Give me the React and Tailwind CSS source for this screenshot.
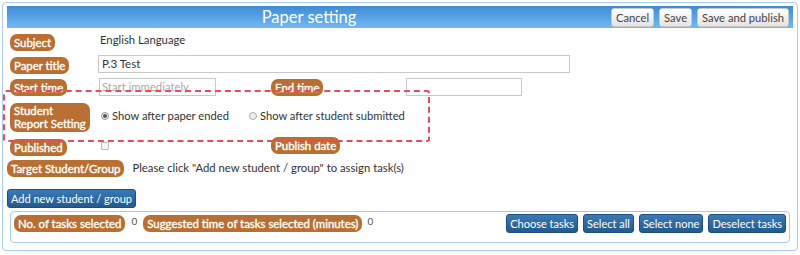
import React from "react";

const Label = ({ children, className = "h-[17px]" }) => (
  <span
    className={
      "inline-flex items-center bg-[#b96f31] text-white text-[11.4px] leading-[13px] px-[4px] rounded-[7px] whitespace-nowrap [-webkit-text-stroke:0.35px_white] " +
      className
    }
  >
    {children}
  </span>
);

const GrayBtn = ({ children }) => (
  <button className="h-[19px] px-[4px] text-[11.2px] leading-[17px] text-[#444] border border-[#c9c9c9] rounded-[3px] bg-gradient-to-b from-[#ffffff] to-[#e4e4e4]">
    {children}
  </button>
);

const BlueBtn = ({ children }) => (
  <button className="h-[19px] px-[3px] text-[11px] leading-[17px] text-white border border-[#1d4f7e] rounded-[3px] bg-gradient-to-b from-[#3a7ab5] to-[#245a8c]">
    {children}
  </button>
);

export default function App() {
  return (
    <div
      className="relative w-[800px] h-[255px] bg-white p-[2px] text-[#333]"
      style={{ fontFamily: "Lato, 'Liberation Sans', sans-serif" }}
    >
      <div className="h-[249px] border border-[#a9cbec] rounded-[4px] px-[4px] pt-[3px]">
        {/* header */}
        <div className="flex items-center h-[22px] bg-gradient-to-b from-[#3f8bd4] to-[#71b9f2]">
          <div className="flex-1 text-center text-white text-[16.5px] leading-[20px]">
            Paper setting
          </div>
          <div className="flex gap-[5px] pr-[4px]">
            <GrayBtn>Cancel</GrayBtn>
            <GrayBtn>Save</GrayBtn>
            <GrayBtn>Save and publish</GrayBtn>
          </div>
        </div>

        <div className="pl-[3px]">
          {/* subject */}
          <div className="flex items-center h-[17px] mt-[4px]">
            <div className="w-[90px]">
              <Label>Subject</Label>
            </div>
            <span className="text-[11.3px]">English Language</span>
          </div>

          {/* paper title */}
          <div className="flex items-center h-[17px] mt-[6px]">
            <div className="w-[88px]">
              <Label>Paper title</Label>
            </div>
            <div className="w-[472px] h-[18px] border border-[#c8c8c8] text-[11.5px] leading-[16px] pl-[3px]">
              P.3 Test
            </div>
          </div>

          {/* start / end time */}
          <div className="flex items-center h-[17px] mt-[5px]">
            <div className="w-[89px]">
              <Label>Start time</Label>
            </div>
            <div className="w-[117px] h-[18px] mt-[2px] border border-[#c8c8c8] text-[11.3px] leading-[16px] pl-[2px] text-[#aaa] overflow-hidden whitespace-nowrap">
              Start immediately
            </div>
            <div className="w-[55px]" />
            <div className="w-[135px]">
              <Label>End time</Label>
            </div>
            <div className="w-[116px] h-[18px] mt-[2px] border border-[#c8c8c8]" />
          </div>

          {/* student report setting */}
          <div className="flex items-center mt-[6px] h-[29px]">
            <div className="w-[88px]">
              <Label className="h-[29px] leading-[13px]">
                Student
                <br />
                Report Setting
              </Label>
            </div>
            <div className="flex items-center text-[11.2px] ml-[3px] mt-[4px]">
              <span className="w-[8px] h-[8px] rounded-full border border-[#999] bg-[#eee] flex items-center justify-center mr-[3px]">
                <span className="w-[4px] h-[4px] rounded-full bg-[#555]" />
              </span>
              Show after paper ended
              <span className="w-[8px] h-[8px] rounded-full border border-[#aaa] bg-[#eee] ml-[20px] mr-[3px]" />
              Show after student submitted
            </div>
          </div>

          {/* published */}
          <div className="flex items-center h-[17px] mt-[8px]">
            <div className="w-[91px]">
              <Label>Published</Label>
            </div>
            <span className="w-[8px] h-[8px] border border-[#bbb] bg-[#f4f4f4] rounded-[1px]" />
            <div className="w-[162px]" />
            <Label>Publish date</Label>
          </div>
        </div>

        {/* target */}
        <div className="flex items-center h-[17px] mt-[6px]">
          <Label>Target Student/Group</Label>
          <span className="text-[11.3px] ml-[8px]">
            Please click "Add new student / group" to assign task(s)
          </span>
        </div>

        {/* add button */}
        <div className="flex mt-[12px] h-[19px]">
          <BlueBtn>Add new student / group</BlueBtn>
        </div>

        {/* inner panel */}
        <div className="ml-[3px] mr-[3px] mt-[3px] h-[32px] border border-[#a9cbec] rounded-[4px] flex items-start px-[3px] pt-[2px]">
          <div className="flex items-start mt-[1px]">
            <Label>No. of tasks selected</Label>
            <span className="text-[10px] text-[#555] ml-[6px] mr-[6px] leading-[12px]">0</span>
            <Label>Suggested time of tasks selected (minutes)</Label>
            <span className="text-[10px] text-[#555] ml-[5px] leading-[12px]">0</span>
          </div>
          <div className="flex-1" />
          <div className="flex gap-[5px]">
            <BlueBtn>Choose tasks</BlueBtn>
            <BlueBtn>Select all</BlueBtn>
            <BlueBtn>Select none</BlueBtn>
            <BlueBtn>Deselect tasks</BlueBtn>
          </div>
        </div>
      </div>

      {/* red annotation box */}
      <div className="absolute left-[3px] top-[90px] w-[427px] h-[52px] border-2 border-dashed border-[#f0485a] rounded-[3px] pointer-events-none" />
    </div>
  );
}
